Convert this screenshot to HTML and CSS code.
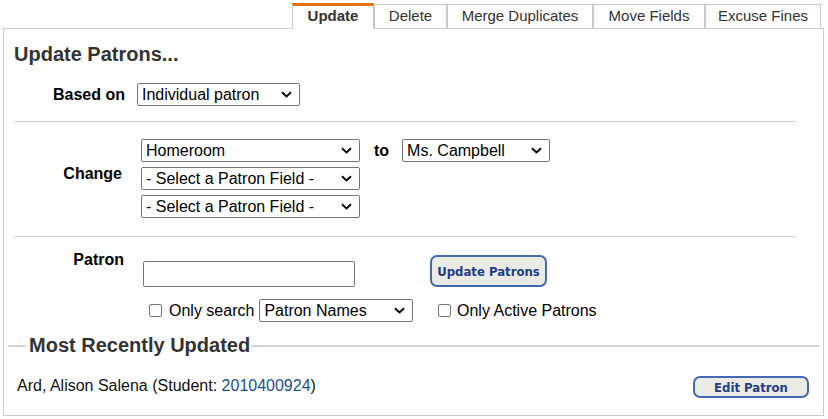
FILE: index.html
```html
<!DOCTYPE html>
<html>
<head>
<meta charset="utf-8">
<title>Update Patrons</title>
<link rel="stylesheet" href="styles.css">
</head>
<body>
<div class="tabs">
  <div class="tab tab-active tab-update">Update</div>
  <div class="tab tab-delete">Delete</div>
  <div class="tab tab-merge">Merge Duplicates</div>
  <div class="tab tab-move">Move Fields</div>
  <div class="tab tab-excuse">Excuse Fines</div>
</div>
<div class="panel">
  <h1 class="title">Update Patrons...</h1>

  <div class="based">
    <label class="lbl lbl-based">Based on</label>
    <select class="sel sel-based"><option>Individual patron</option></select>
  </div>

  <div class="rule"></div>

  <div class="change">
    <label class="lbl lbl-change">Change</label>
    <div class="change-fields">
      <div class="change-first">
        <select class="sel sel-field"><option>Homeroom</option></select>
        <span class="to">to</span>
        <select class="sel sel-value"><option>Ms. Campbell</option></select>
      </div>
      <select class="sel sel-field"><option>- Select a Patron Field -</option></select>
      <select class="sel sel-field"><option>- Select a Patron Field -</option></select>
    </div>
  </div>

  <div class="rule rule-2"></div>

  <div class="patron">
    <label class="lbl lbl-patron">Patron</label>
    <input class="txt" type="text">
    <button class="btn btn-update">Update Patrons</button>
    <div class="cell-empty"></div>
    <div class="check check-search">
      <input class="cb" type="checkbox">
      <span class="check-text">Only search</span>
      <select class="sel sel-names"><option>Patron Names</option></select>
    </div>
    <div class="check check-active">
      <input class="cb" type="checkbox">
      <span class="check-text">Only Active Patrons</span>
    </div>
  </div>

  <fieldset class="recent">
    <legend class="recent-title">Most Recently Updated</legend>
    <div class="recent-row">
      <span class="recent-name">Ard, Alison Salena (Student: <a class="link" href="#">2010400924</a>)</span>
      <button class="btn btn-edit">Edit Patron</button>
    </div>
  </fieldset>
</div>
</body>
</html>
```

FILE: styles.css
```css
html, body {
  margin: 0;
  padding: 0;
  background: #fff;
}
body {
  font-family: "Liberation Sans", Arial, sans-serif;
  font-size: 16px;
  color: #000;
  width: 828px;
  height: 419px;
  overflow: hidden;
}

/* tabs */
.tabs {
  display: flex;
  justify-content: flex-end;
  align-items: flex-end;
  height: 28px;
  padding-right: 7px;
}
.tab {
  box-sizing: border-box;
  height: 24px;
  border: 1px solid #c8c8c8;
  border-bottom: none;
  font-size: 15px;
  line-height: 22px;
  color: #333;
  text-align: center;
  background: #fff;
  white-space: nowrap;
}
.tab-active {
  height: 26px;
  border-top: 3px solid #e3720f;
  line-height: 20px;
  margin-bottom: -1px;
  font-weight: bold;
  position: relative;
  z-index: 1;
}
.tab-update { width: 82px; }
.tab-delete { width: 73px; }
.tab-merge { width: 146px; }
.tab-move { width: 112px; }
.tab-excuse { width: 116px; }

/* panel */
.panel {
  margin: 0 4px 0 3px;
  border: 1px solid #cccccc;
  padding: 0 10px 0 10px;
  box-sizing: border-box;
  height: 388px;
}
.title {
  margin: 14px 0 0 0;
  font-size: 20px;
  line-height: 23px;
  font-weight: bold;
  color: #333;
}
.lbl {
  font-weight: bold;
  font-size: 16px;
  color: #000;
  text-align: right;
}

.sel {
  -webkit-appearance: none;
  appearance: none;
  box-sizing: border-box;
  height: 23px;
  border: 1px solid #767676;
  border-radius: 2px;
  padding: 0 20px 0 4px;
  font-family: "Liberation Sans", Arial, sans-serif;
  font-size: 16px;
  color: #000;
  background: #fff url("data:image/svg+xml;utf8,<svg xmlns='http://www.w3.org/2000/svg' width='11' height='7' viewBox='0 0 11 7'><path d='M1 1.2l4.5 4.3 4.5-4.3' fill='none' stroke='%23000' stroke-width='1.9'/></svg>") no-repeat right 7px center;
  margin: 0;
  flex-shrink: 0;
}

.based {
  display: flex;
  align-items: center;
  margin-top: 17px;
}
.lbl-based { width: 111px; margin-right: 12px; }
.sel-based { width: 163px; }

.rule {
  border-top: 1px solid #cfcfcf;
  margin: 15px 17px 0 0;
}

.change {
  display: flex;
  margin-top: 17px;
}
.lbl-change {
  width: 108px;
  margin-right: 19px;
  padding-top: 26px;
}
.change-fields {
  display: flex;
  flex-direction: column;
  gap: 5px;
}
.change-first {
  display: flex;
  align-items: center;
}
.sel-field { width: 219px; }
.to {
  font-weight: bold;
  margin: 0 13px 0 14px;
}
.sel-value { width: 148px; }

.rule-2 { margin-top: 18px; }

.patron {
  display: grid;
  grid-template-columns: 110px 268px auto;
  column-gap: 19px;
  row-gap: 12px;
  margin-top: 14px;
}
.lbl-patron { align-self: start; }
.txt {
  box-sizing: border-box;
  width: 212px;
  height: 26px;
  margin: 10px 0 0 0;
  border: 1px solid #767676;
  border-radius: 2px;
  padding: 0 4px;
}
.btn {
  box-sizing: border-box;
  font-family: "DejaVu Sans Condensed", "DejaVu Sans", sans-serif;
  font-weight: bold;
  font-size: 13px;
  color: #1f3c88;
  background: #ebebe5;
  border: 2px solid #4469b0;
  border-radius: 7px;
  padding: 0;
  margin: 0;
}
.btn-update {
  justify-self: start;
  width: 117px;
  height: 32px;
  margin-top: 4px;
}
.check {
  display: flex;
  align-items: center;
  white-space: nowrap;
}
.check-search { padding-left: 6px; }
.check-active { padding-left: 8px; }
.cb {
  -webkit-appearance: none;
  appearance: none;
  box-sizing: border-box;
  width: 13px;
  height: 13px;
  border: 1px solid #767676;
  border-radius: 2px;
  background: #fff;
  margin: 0 7px 0 0;
  flex-shrink: 0;
}
.check-active .cb { margin-right: 6px; }
.sel-names { width: 154px; margin-left: 5px; }

/* recent */
.recent {
  margin: 12px -6px 0 -6px;
  padding: 0 10px 0 9px;
  border: none;
  border-top: 2px solid #d2d2d2;
  min-width: 0;
}
.recent-title {
  margin-left: 9px;
  padding: 0 1px 0 3px;
  font-size: 20px;
  line-height: 23px;
  font-weight: bold;
  color: #333;
}
.recent-row {
  display: flex;
  justify-content: space-between;
  align-items: center;
  margin-top: 19px;
}
.recent-name {
  color: #111;
  margin-bottom: 3px;
}
.link {
  color: #1d4f8c;
  text-decoration: none;
}
.btn-edit {
  width: 116px;
  height: 22px;
}
```
